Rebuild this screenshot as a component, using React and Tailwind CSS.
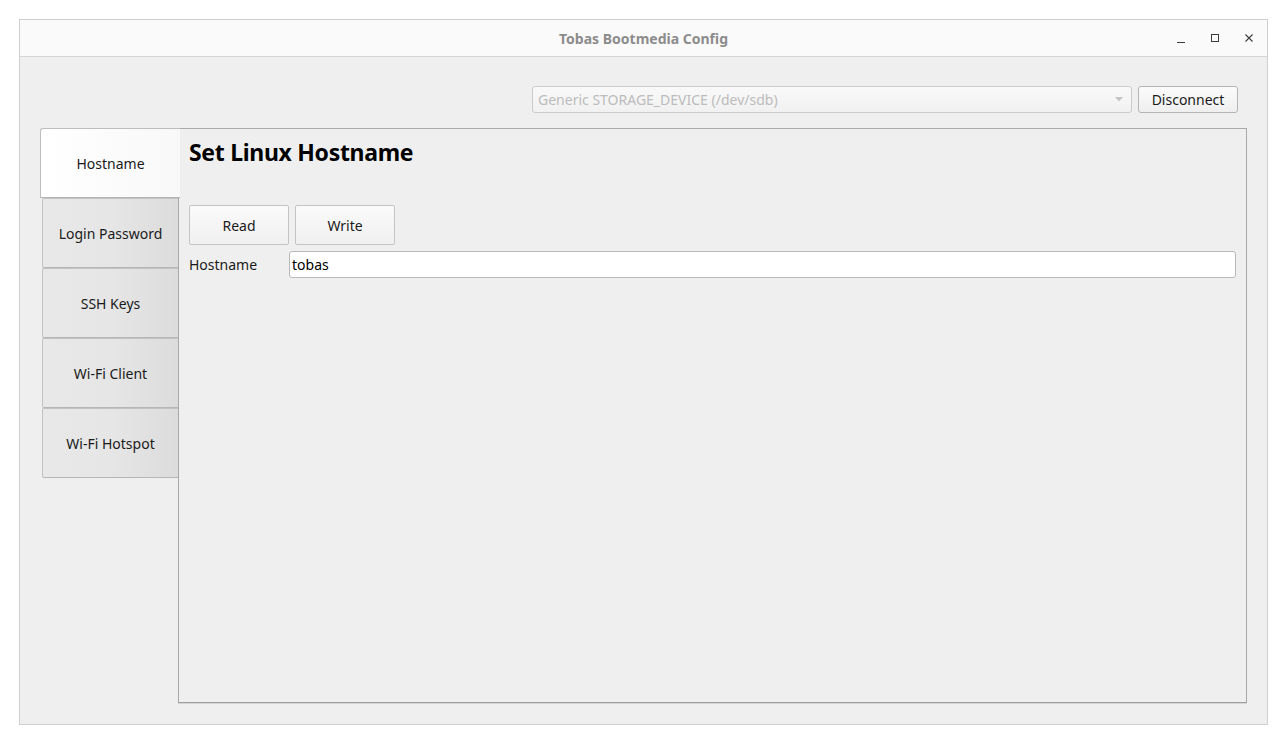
import React, { useState } from "react";

const tabs = ["Hostname", "Login Password", "SSH Keys", "Wi-Fi Client", "Wi-Fi Hotspot"];

const font = { fontFamily: '"Noto Sans", "Open Sans", sans-serif' };

const TitleBar = () => (
  <div className="flex h-[37px] items-center border-b border-[#d6d6d6] bg-[#fafafa]">
    <div className="w-[130px]" />
    <div className="flex-1 text-center text-[14px] font-bold text-[#8c8c8c]">
      Tobas Bootmedia Config
    </div>
    <div className="flex w-[130px] items-center justify-end gap-[22px] pr-[12px] text-[#3c3c3c]">
      <svg width="12" height="12" viewBox="0 0 12 12">
        <path d="M2 10.5h8" stroke="currentColor" strokeWidth="1" />
      </svg>
      <svg width="12" height="12" viewBox="0 0 12 12">
        <rect x="2.5" y="2.5" width="7" height="7" fill="none" stroke="currentColor" strokeWidth="1" />
      </svg>
      <svg width="12" height="12" viewBox="0 0 12 12">
        <path d="M2.5 2.5l7 7M9.5 2.5l-7 7" stroke="currentColor" strokeWidth="1.1" />
      </svg>
    </div>
  </div>
);

const Tab = ({ label, selected, onClick }) =>
  selected ? (
    <button
      onClick={onClick}
      className="relative z-10 flex h-[70px] w-[140px] items-center justify-center rounded-tl-[3px] border border-r-0 border-[#bdbdbd] border-b-[#b4b4b4] bg-gradient-to-r from-white to-[#f8f8f8] text-[14px] text-[#1a1a1a]"
    >
      {label}
    </button>
  ) : (
    <button
      onClick={onClick}
      className="ml-[2px] flex h-[70px] w-[136px] items-center justify-center rounded-l-[2px] border border-r-0 border-[#c2c2c2] border-b-[#b6b6b6] bg-gradient-to-r from-[#e8e8e8] via-[#e6e6e6] to-[#dcdcdc] text-[14px] text-[#1a1a1a]"
    >
      {label}
    </button>
  );

const PushButton = ({ children }) => (
  <button className="flex h-[40px] w-[100px] items-center justify-center rounded-[2px] border border-[#c4c4c4] bg-gradient-to-b from-[#fafafa] to-[#f0f0f0] text-[14px] text-[#1a1a1a]">
    {children}
  </button>
);

export default function App() {
  const [active, setActive] = useState(0);
  const [hostname, setHostname] = useState("tobas");

  return (
    <div className="min-h-[744px] w-[1287px] bg-white pt-[19px] pl-[19px]" style={font}>
      <div className="flex h-[706px] w-[1249px] flex-col border border-[#cfcfcf] bg-[#efefef]">
        <TitleBar />

        <div className="flex flex-1 flex-col px-[20px] pt-[29px] pb-[21px]">
          <div className="flex justify-end gap-[6px] pr-[9px]">
            <div className="flex h-[27px] w-[600px] items-center justify-between rounded-[3px] border border-[#cbcbcb] bg-gradient-to-b from-[#f9f9f9] to-[#f1f1f1] pl-[5px] pr-[8px] text-[14px] text-[#bcbcbc]">
              <span>Generic STORAGE_DEVICE (/dev/sdb)</span>
              <svg width="8" height="5" viewBox="0 0 8 5">
                <path d="M0 0h8L4 4.5z" fill="#c4c4c4" />
              </svg>
            </div>
            <button className="flex h-[27px] w-[100px] items-center justify-center rounded-[3px] border border-[#b4b4b4] bg-gradient-to-b from-[#fbfbfb] to-[#efefef] text-[14px] text-[#1a1a1a]">
              Disconnect
            </button>
          </div>

          <div className="mt-[15px] flex flex-1">
            <div className="flex w-[138px] flex-col">
              {tabs.map((t, i) => (
                <Tab key={t} label={t} selected={i === active} onClick={() => setActive(i)} />
              ))}
            </div>

            <div className="flex-1 border border-[#a9a9a9] border-b-[#9f9f9f] bg-[#efefef] px-[10px] pt-[8px] shadow-[0_1px_0_#d4d4d4]">
              <h1 className="text-[23px] leading-[30px] font-bold tracking-[-0.3px] text-black">
                Set Linux Hostname
              </h1>
              <div className="mt-[38px] flex gap-[6px]">
                <PushButton>Read</PushButton>
                <PushButton>Write</PushButton>
              </div>
              <div className="mt-[6px] flex items-center">
                <label className="w-[100px] text-[14px] text-[#1a1a1a]">Hostname</label>
                <input
                  value={hostname}
                  onChange={(e) => setHostname(e.target.value)}
                  className="h-[27px] flex-1 rounded-[3px] border border-[#b9b9b9] bg-white px-[2px] text-[14px] text-black outline-none"
                />
              </div>
            </div>
          </div>
        </div>
      </div>
    </div>
  );
}
